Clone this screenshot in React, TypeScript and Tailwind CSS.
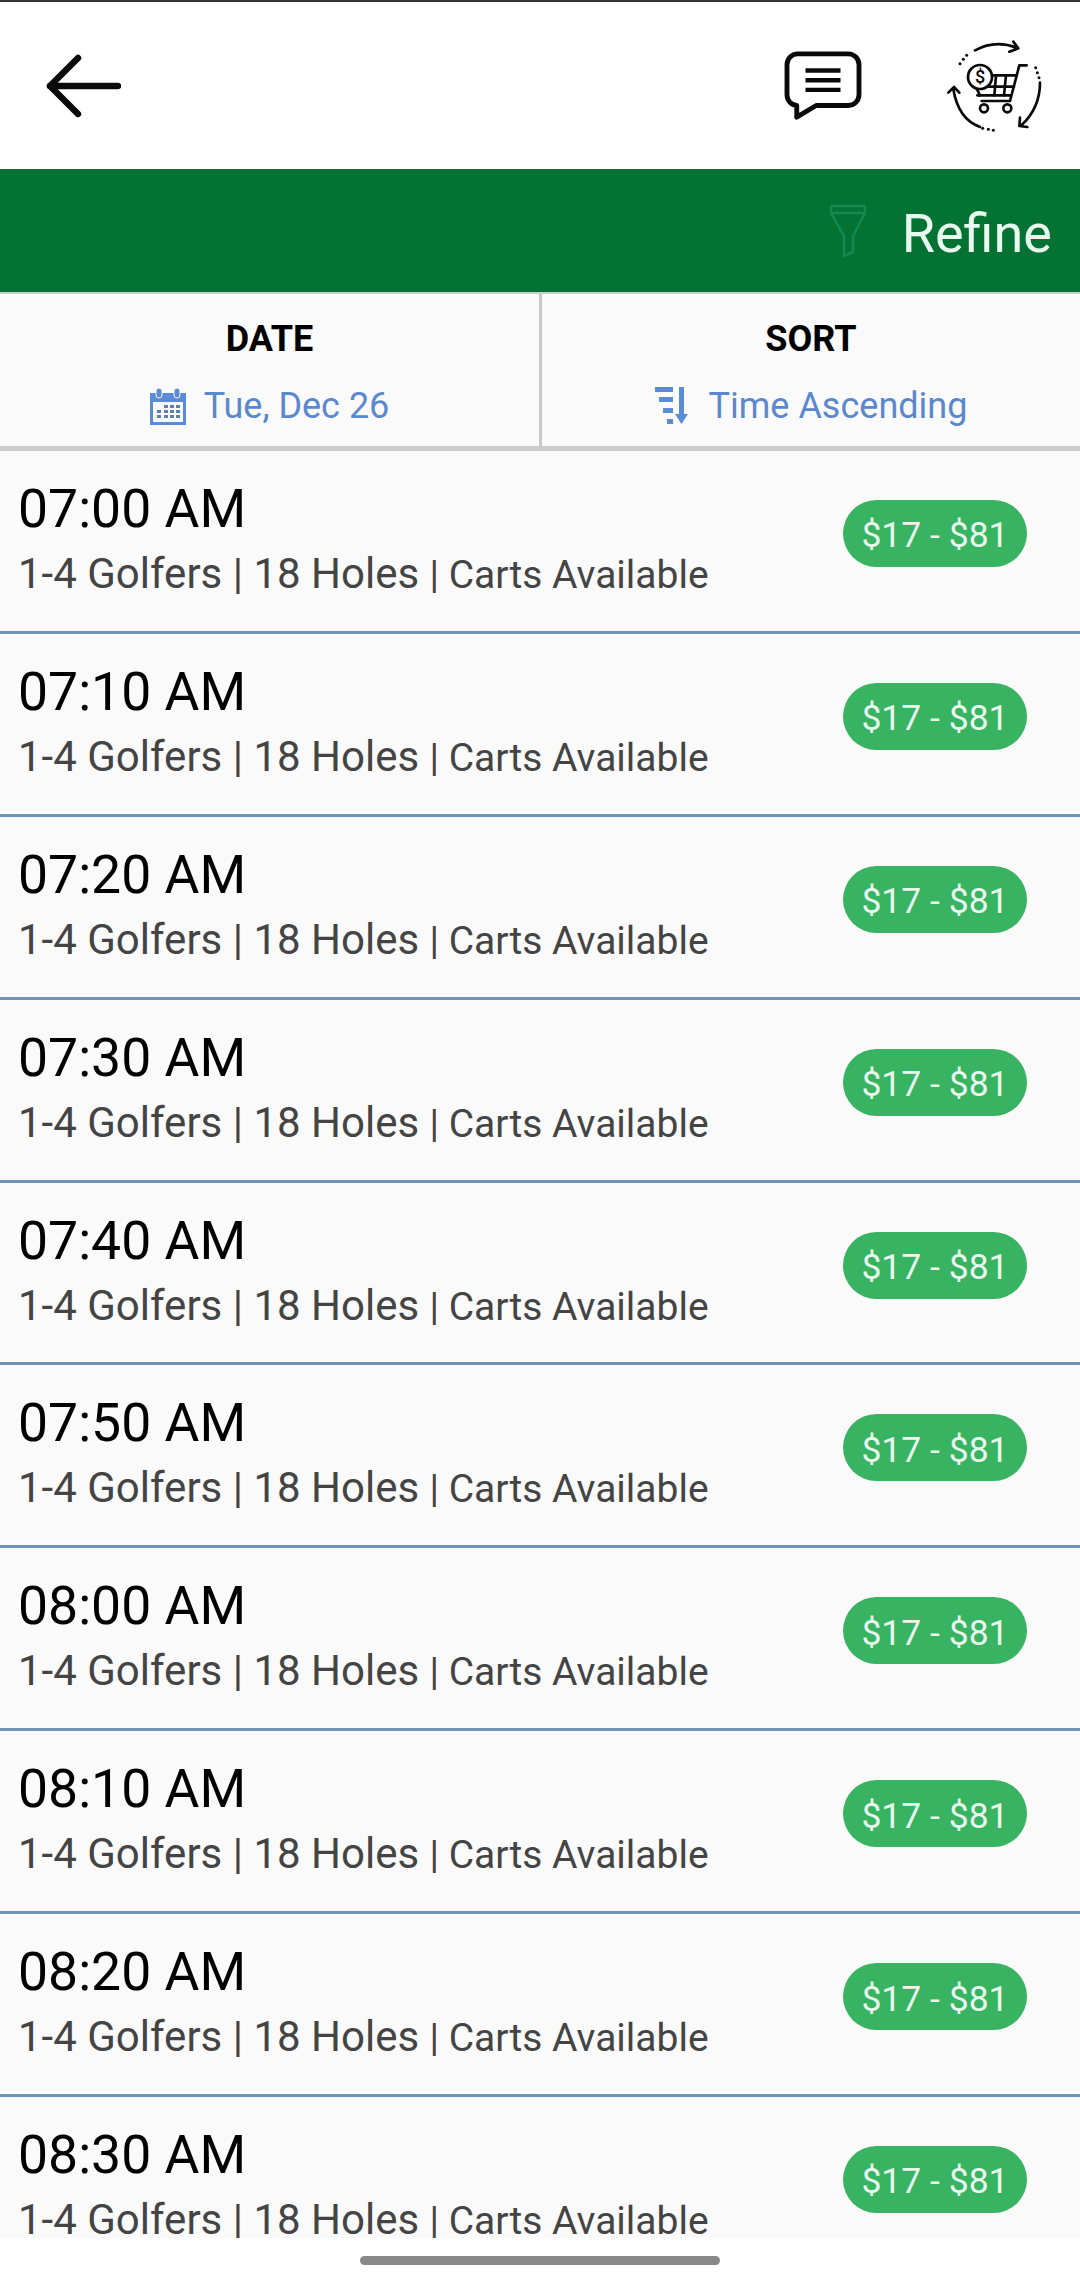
const TEE_TIMES = ['07:00 AM', '07:10 AM', '07:20 AM', '07:30 AM', '07:40 AM', '07:50 AM', '08:00 AM', '08:10 AM', '08:20 AM', '08:30 AM'];

function BackArrow() {
  return (
    <svg width="76" height="66" viewBox="0 0 76 66" fill="none" stroke="#0a0a0a" strokeWidth="6.5" strokeLinecap="round" strokeLinejoin="round" className="block">
      <path d="M5 33h68M33 5 5 33l28 28" />
    </svg>
  );
}

function ChatIcon() {
  return (
    <svg width="78" height="72" viewBox="0 0 80 74" fill="none" className="block">
      <path d="M14 3h52a11 11 0 0 1 11 11v31a11 11 0 0 1-11 11H33L13 68V56h0A11 11 0 0 1 3 45V14A11 11 0 0 1 14 3Z" stroke="#0a0a0a" strokeWidth="5" strokeLinejoin="round" />
      <path d="M22 20h36M22 30h36M22 40h36" stroke="#0a0a0a" strokeWidth="4.5" />
    </svg>
  );
}

function CartCycleIcon() {
  return (
    <svg width="130" height="130" viewBox="0 0 390 390" fill="none" stroke="#0a0a0a" strokeLinecap="round" strokeLinejoin="round" className="block">
      {/* circular arrows */}
      <g strokeWidth="8">
        <path d="M165 88Q225 55 290 80M280 62l15 20-27 10" />
        <path d="M360 185Q360 260 305 312M300 290l-2 25 24 3" />
        <path d="M180 318Q115 295 100 205M85 215l17-17 16 17" />
      </g>
      <g fill="#0a0a0a" stroke="none">
        <circle cx="120" cy="128" r="4.5" />
        <circle cx="130" cy="115" r="4.5" />
        <circle cx="140" cy="103" r="4.5" />
        <circle cx="347" cy="140" r="4.5" />
        <circle cx="352" cy="155" r="4.5" />
        <circle cx="357" cy="170" r="4.5" />
        <circle cx="188" cy="322" r="4.5" />
        <circle cx="205" cy="325" r="4.5" />
        <circle cx="220" cy="328" r="4.5" />
      </g>
      {/* cart */}
      <g strokeWidth="8">
        <path d="M320 133h-22l-28 107h-85" />
        <path d="M212 163h78M200 197h82M172 223h100" />
        <path d="M228 163l-5 60M258 163l-6 60" />
        <path d="M170 203l10 20" />
        <circle cx="192" cy="262" r="12" />
        <circle cx="262" cy="262" r="12" />
        <circle cx="180" cy="168" r="36" fill="#fff" />
      </g>
      <text x="180" y="187" textAnchor="middle" fill="#0a0a0a" stroke="none" className="font-['Roboto',sans-serif] text-[54px] font-medium">$</text>
    </svg>
  );
}

function FunnelIcon() {
  return (
    <svg width="36" height="53" viewBox="0 0 36 53" fill="none" stroke="#16894f" strokeWidth="2.5" className="block">
      <path d="M1 2h34v7L23 32v16l-9 4V32L1 9ZM1 9h34" strokeLinejoin="round" />
    </svg>
  );
}

function CalendarIcon() {
  return (
    <svg width="36" height="37" viewBox="0 0 36 37" className="block">
      <rect x="0" y="5" width="36" height="32" fill="#5a8bd6" />
      <rect x="3" y="14" width="30" height="20" fill="#f6f8fc" />
      <rect x="6" y="0" width="6" height="10" rx="3" fill="#5a8bd6" stroke="#fafafa" strokeWidth="1" />
      <rect x="24" y="0" width="6" height="10" rx="3" fill="#5a8bd6" stroke="#fafafa" strokeWidth="1" />
      <g fill="#5f7fb0">
        <rect x="14" y="17" width="4" height="3" />
        <rect x="20" y="17" width="4" height="3" />
        <rect x="26" y="17" width="4" height="3" />
        <rect x="7" y="22" width="4" height="3" />
        <rect x="14" y="22" width="4" height="3" />
        <rect x="20" y="22" width="4" height="3" />
        <rect x="26" y="22" width="4" height="3" />
        <rect x="7" y="27" width="4" height="3" />
        <rect x="14" y="27" width="4" height="3" />
        <rect x="20" y="27" width="4" height="3" />
        <rect x="26" y="27" width="4" height="3" />
      </g>
    </svg>
  );
}

function SortIcon() {
  return (
    <svg width="36" height="38" viewBox="0 0 36 38" fill="#5a8bd6" className="block">
      <rect x="0" y="0" width="18" height="5" />
      <rect x="4" y="10" width="14" height="5" />
      <rect x="8" y="21" width="10" height="5" />
      <rect x="12" y="32" width="6" height="5" />
      <rect x="24" y="0" width="5" height="30" />
      <path d="M20 27h13l-6.500 10Z" />
    </svg>
  );
}

function FilterCell({ label, icon, value, className }: { label: string; icon: React.ReactNode; value: string; className: string }) {
  return (
    <div className={`flex flex-col items-center pt-[21px] ${className}`}>
      <div className="text-[36px] font-bold leading-[48px] text-black">{label}</div>
      <div className="mt-[19px] flex items-center gap-[18px]">
        {icon}
        <span className="text-[36px] leading-[48px] text-[#5a88cf]">{value}</span>
      </div>
    </div>
  );
}

function TeeTimeRow({ time }: { time: string }) {
  return (
    <div className="flex h-[182.9px] shrink-0 border-b-[3px] border-[#6d93b8] pl-[18px] pr-[53px]">
      <div className="pt-[23px]">
        <div className="text-[53.5px] leading-[70px] text-black">{time}</div>
        <div className="mt-[2px] text-[42px] leading-[56px] text-[#444444]">
          1-4 Golfers | 18 Holes <span className="text-[39px]">| Carts Available</span>
        </div>
      </div>
      <div className="ml-auto mt-[49px] flex h-[67px] w-[184px] items-center justify-center rounded-full bg-[#37b361] pt-[5px] text-[35.5px] text-[#e9f8ee]">
        $17 - $81
      </div>
    </div>
  );
}

export default function App() {
  return (
    <div className="flex h-[2286px] w-[1080px] flex-col overflow-hidden bg-white font-['Roboto',sans-serif]">
      <header className="flex h-[169px] shrink-0 items-center border-t-2 border-[#333333] pl-[45px] pr-[30px]">
        <BackArrow />
        <div className="ml-auto flex items-center gap-[58px]">
          <div className="mt-[2px]">
            <ChatIcon />
          </div>
          <CartCycleIcon />
        </div>
      </header>

      <div className="flex h-[123px] shrink-0 items-center justify-end gap-[36px] bg-[#047232] pr-[28px]">
        <FunnelIcon />
        <span className="pt-[5px] text-[54px] text-[#e9f8ee]">Refine</span>
      </div>

      <div className="flex h-[159px] shrink-0 border-t-[2px] border-b-[5px] border-[#cccccc] bg-[#fafafa]">
        <FilterCell label="DATE" icon={<CalendarIcon />} value="Tue, Dec 26" className="w-[542px] border-r-[3px] border-[#c9c9c9]" />
        <FilterCell label="SORT" icon={<SortIcon />} value="Time Ascending" className="flex-1" />
      </div>

      <div className="flex h-[1787px] shrink-0 flex-col overflow-hidden bg-[#fafafa]">
        {TEE_TIMES.map((time) => (
          <TeeTimeRow key={time} time={time} />
        ))}
      </div>

      <div className="flex flex-1 justify-center pt-[18px]">
        <div className="h-[9px] w-[360px] rounded-full bg-[#888888]" />
      </div>
    </div>
  );
}
